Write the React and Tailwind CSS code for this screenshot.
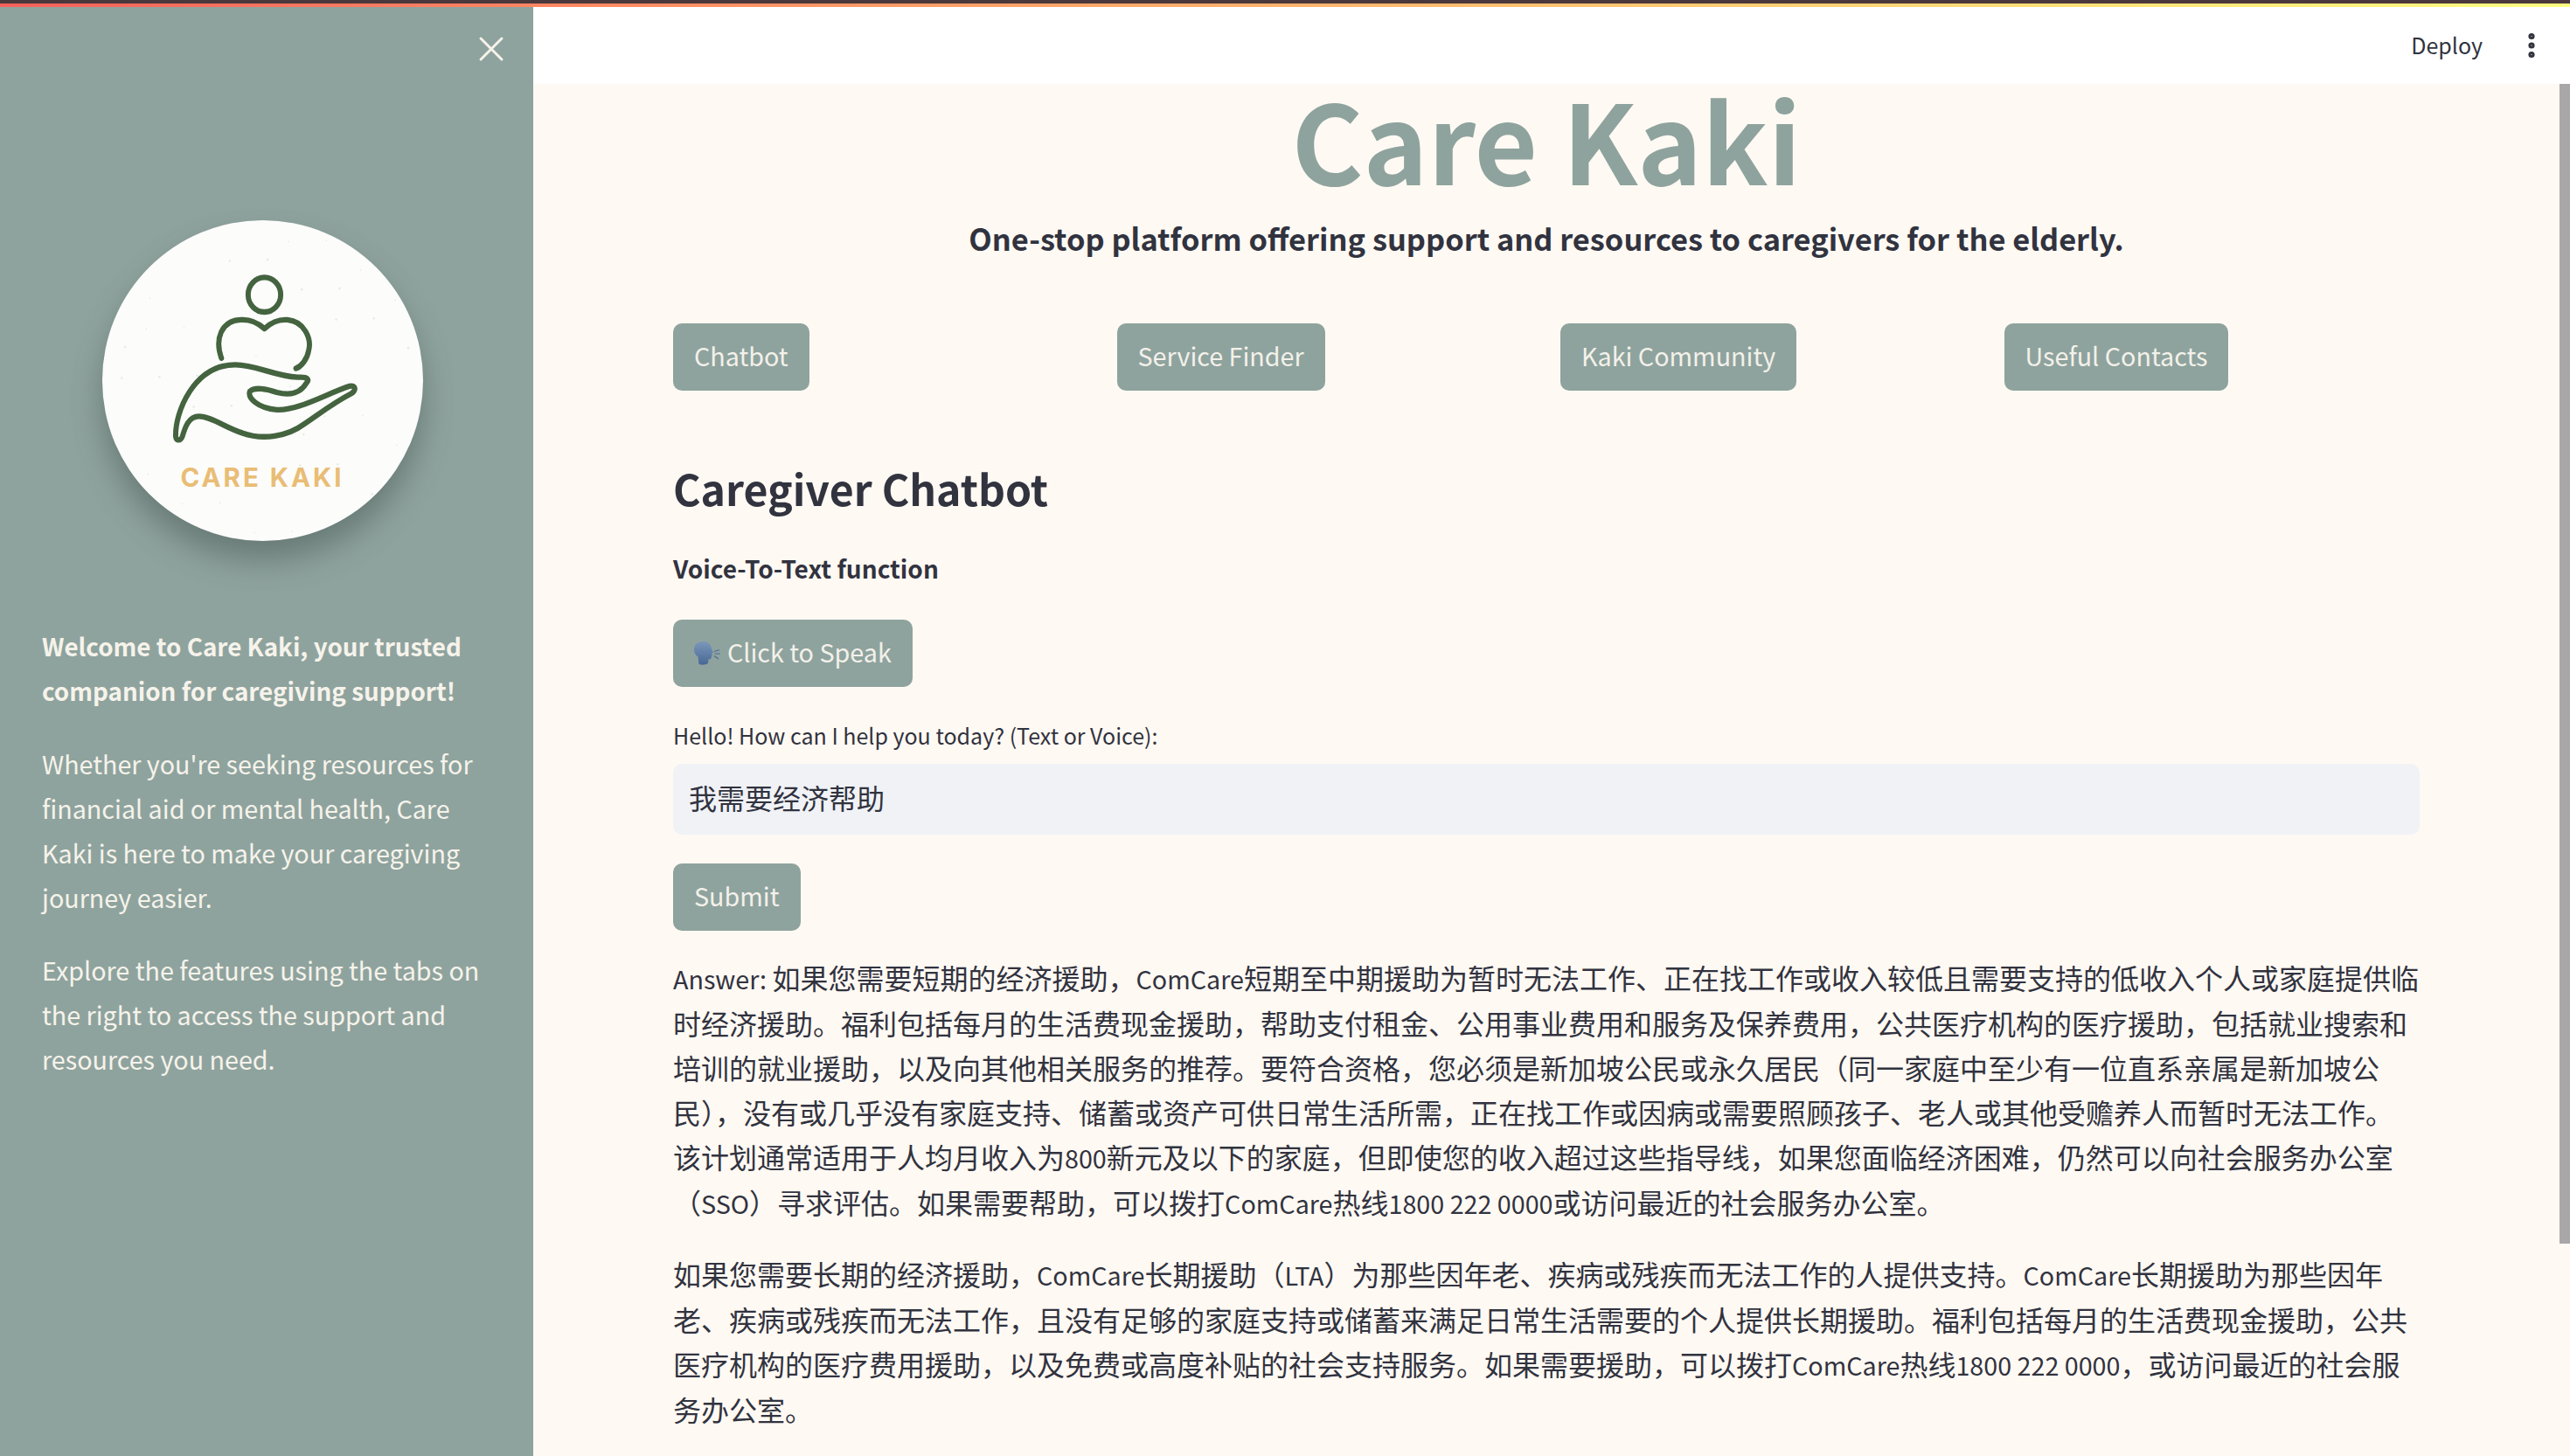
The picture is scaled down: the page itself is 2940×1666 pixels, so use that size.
import { X, EllipsisVertical } from 'lucide-react';

const specks = Array.from({ length: 70 }, (_, i) => ({
  x: 296 + ((i * 137) % 926),
  y: 598 + ((i * 211) % 870),
  r: 1 + (i % 3),
}));

// the Latin glyphs of the CJK font run large, so Latin runs are set smaller
function L({ children }) {
  return <span className="text-[28.7px]">{children}</span>;
}

function Logo() {
  return (
    <div className="relative w-[367px] h-[367px] rounded-full bg-[#fcfcfb] shadow-[0_22px_34px_rgba(60,75,70,0.45)]">
      <svg viewBox="296 598 926 870" preserveAspectRatio="none" className="w-full h-full rounded-full">
        {specks.map((s, i) => (
          <circle key={i} cx={s.x} cy={s.y} r={s.r} fill="#e8e8e5" />
        ))}
        <g fill="none" stroke="#44633f" strokeWidth="15" strokeLinecap="round" strokeLinejoin="round">
          <circle cx="764" cy="800" r="47" />
          <path d="M640 972C620 920 640 870 695 868C725 866 750 880 764 892C780 878 805 866 830 868C880 872 900 920 892 950C888 975 870 995 855 1000" />
          <path d="M508 1185C505 1120 560 990 680 990C740 990 790 1020 860 1024C890 1022 895 1030 885 1040C870 1065 840 1075 800 1065C770 1055 735 1050 722 1062C715 1080 745 1108 800 1112C860 1115 940 1070 1010 1048C1030 1045 1028 1060 1015 1068C960 1095 920 1125 880 1150C830 1185 760 1195 700 1175C650 1160 610 1130 575 1130C545 1130 535 1160 527 1185C522 1197 510 1197 508 1185Z" />
        </g>
      </svg>
      <span className="absolute left-0 right-0 top-[276px] text-center text-[29.5px] leading-[36px] font-bold tracking-[3px] text-[#e9bd75] font-['Inter',sans-serif]">
        CARE KAKI
      </span>
    </div>
  );
}

function SpeakingHead() {
  return (
    <svg viewBox="0 0 30 28" className="w-[30px] h-[28px] shrink-0">
      <defs>
        <linearGradient id="head" x1="0" y1="0" x2="0" y2="1">
          <stop offset="0" stopColor="#7b97ba" />
          <stop offset="1" stopColor="#486895" />
        </linearGradient>
      </defs>
      <path d="M10 1C4 1 0 5 0 10.500C0 14 1.500 16.500 4.500 18.500L5.500 27C9 28 13 28 16 26L16.500 21.500C19 21.500 20 20.500 19.800 18L21 17.500L20 15L22 13.500C20 11 20 8 19 6C17.500 2.500 14.500 1 10 1Z" fill="url(#head)" />
      <path d="M23 12.500L29 10.500M23.500 15H30M23 17.500L28 21" stroke="#4d6b97" strokeWidth="1.200" fill="none" />
    </svg>
  );
}

function Btn({ children, className = '' }) {
  return (
    <button className={`h-[77px] px-6 rounded-[10px] bg-[#8fa39e] text-[28.7px] leading-none text-[#f3f1ea] flex items-center gap-[8px] pb-[2px] ${className}`}>
      {children}
    </button>
  );
}

export default function App() {
  return (
    <div className="w-[2940px] h-[1666px] overflow-hidden flex flex-col bg-white font-['Noto_Sans_CJK_SC','Noto_Sans',sans-serif] text-[#31333f]">
      <div className="h-1 shrink-0 bg-[#4b383c]" />
      <div className="h-1 shrink-0 bg-gradient-to-r from-[#f9605a] to-[#fffd80]" />
      <div className="flex flex-1 min-h-0">
        {/* Sidebar */}
        <aside className="w-[610px] shrink-0 bg-[#8fa39e] text-[#f6f3eb] flex flex-col relative">
          <button className="absolute top-[24px] left-[538px] text-[#f6f3eb]">
            <X size={48} strokeWidth={1.500} />
          </button>
          <div className="flex justify-center pt-[244px] pr-[10px]">
            <Logo />
          </div>
          <div className="px-12 pt-[95px] text-[28.7px] leading-[51px]">
            <p className="font-bold text-[27.8px]">Welcome to Care Kaki, your trusted companion for caregiving support!</p>
            <p className="mt-[32px]">Whether you're seeking resources for financial aid or mental health, Care Kaki is here to make your caregiving journey easier.</p>
            <p className="mt-[32px]">Explore the features using the tabs on the right to access the support and resources you need.</p>
          </div>
        </aside>

        {/* Main */}
        <div className="flex-1 min-w-0 flex flex-col">
          <header className="h-[88px] shrink-0 bg-white flex items-center justify-end">
            <span className="text-[25px] mt-[-1px]">Deploy</span>
            <EllipsisVertical size={36} strokeWidth={2.800} className="ml-[38px] mr-[26px]" />
          </header>
          <div className="flex-1 min-h-0 flex bg-[#fff9f3]">
            <main className="flex-1 min-w-0 pl-[160px] pr-[160px]">
              <h1 className="text-[125px] leading-[132px] font-bold text-[#8fa39e] text-center mt-[-4px]">Care Kaki</h1>
              <p className="text-[34.4px] leading-[60px] font-bold text-center mt-[18px]">
                One-stop platform offering support and resources to caregivers for the elderly.
              </p>
              <div className="grid grid-cols-4 gap-8 mt-[68px]">
                <div className="flex"><Btn>Chatbot</Btn></div>
                <div className="flex"><Btn>Service Finder</Btn></div>
                <div className="flex"><Btn>Kaki Community</Btn></div>
                <div className="flex"><Btn>Useful Contacts</Btn></div>
              </div>
              <h2 className="text-[48.2px] leading-[72px] font-bold mt-[75px]">Caregiver Chatbot</h2>
              <p className="text-[28px] leading-[51px] font-bold mt-[31px]">Voice-To-Text function</p>
              <div className="flex mt-[33px]">
                <Btn><SpeakingHead />Click to Speak</Btn>
              </div>
              <label className="block text-[25px] leading-[40px] mt-[35px]">Hello! How can I help you today? (Text or Voice):</label>
              <div className="h-[81px] mt-[13px] rounded-[10px] bg-[#f0f2f6] px-[18px] pb-[6px] flex items-center text-[32px]">我需要经济帮助</div>
              <div className="flex mt-[33px]"><Btn>Submit</Btn></div>
              <div className="text-[32px] leading-[51px] mt-[28px] whitespace-nowrap">
                <p>
                  <L>Answer: </L>如果您需要短期的经济援助，<L>ComCare</L>短期至中期援助为暂时无法工作、正在找工作或收入较低且需要支持的低收入个人或家庭提供临<br />
                  时经济援助。福利包括每月的生活费现金援助，帮助支付租金、公用事业费用和服务及保养费用，公共医疗机构的医疗援助，包括就业搜索和<br />
                  培训的就业援助，以及向其他相关服务的推荐。要符合资格，您必须是新加坡公民或永久居民（同一家庭中至少有一位直系亲属是新加坡公<br />
                  民），没有或几乎没有家庭支持、储蓄或资产可供日常生活所需，正在找工作或因病或需要照顾孩子、老人或其他受赡养人而暂时无法工作。<br />
                  该计划通常适用于人均月收入为<L>800</L>新元及以下的家庭，但即使您的收入超过这些指导线，如果您面临经济困难，仍然可以向社会服务办公室<br />
                  （<L>SSO</L>）寻求评估。如果需要帮助，可以拨打<L>ComCare</L>热线<L>1800 222 0000</L>或访问最近的社会服务办公室。
                </p>
                <p className="mt-[30px]">
                  如果您需要长期的经济援助，<L>ComCare</L>长期援助（<L>LTA</L>）为那些因年老、疾病或残疾而无法工作的人提供支持。<L>ComCare</L>长期援助为那些因年<br />
                  老、疾病或残疾而无法工作，且没有足够的家庭支持或储蓄来满足日常生活需要的个人提供长期援助。福利包括每月的生活费现金援助，公共<br />
                  医疗机构的医疗费用援助，以及免费或高度补贴的社会支持服务。如果需要援助，可以拨打<L>ComCare</L>热线<L>1800 222 0000</L>，或访问最近的社会服<br />
                  务办公室。
                </p>
              </div>
            </main>
            <div className="w-3 shrink-0">
              <div className="h-[1327px] bg-[#a9a7a8]" />
            </div>
          </div>
        </div>
      </div>
    </div>
  );
}
